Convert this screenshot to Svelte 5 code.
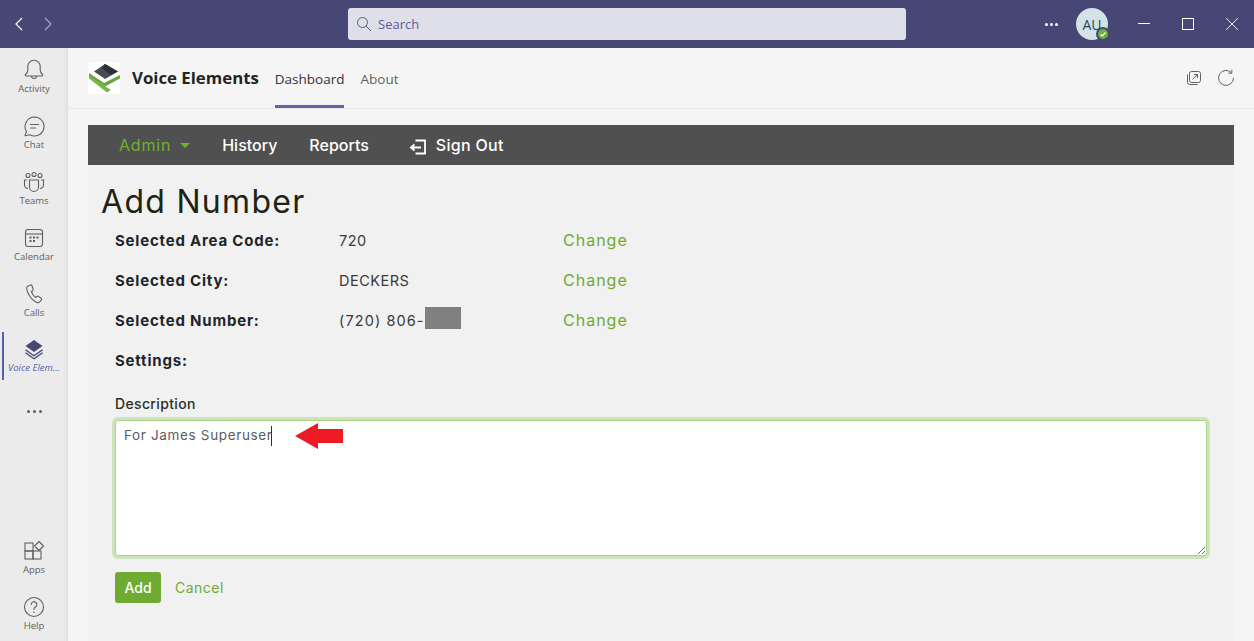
<script>
  const railTop = [
    { label: 'Activity', icon: 'bell' },
    { label: 'Chat', icon: 'chat' },
    { label: 'Teams', icon: 'teams' },
    { label: 'Calendar', icon: 'calendar' },
    { label: 'Calls', icon: 'calls' }
  ];

  const summary = [
    { label: 'Selected Area Code:', value: '720', change: true },
    { label: 'Selected City:', value: 'DECKERS', change: true },
    { label: 'Selected Number:', value: '(720) 806-', masked: true, change: true },
    { label: 'Settings:', value: '', change: false }
  ];

  let description = $state('For James Superuser');
</script>

{#snippet railIcon(name)}
  <svg class="rail-icon" viewBox="0 0 24 24" fill="none" stroke="#5f5f5f" stroke-width="1.1">
    {#if name === 'bell'}
      <path d="M3.500 16.500c1.500-1.200 2.300-2.600 2.300-4.500V8.500a6.200 6.200 0 0 1 12.400 0V12c0 1.900.8 3.300 2.300 4.500.5.500.2 1.500-.6 1.500H4.100c-.8 0-1.100-1-.6-1.500z" stroke-linejoin="round" />
      <path d="M9.500 18a2.500 2.500 0 0 0 5 0" />
    {:else if name === 'chat'}
      <path d="M12.500 3a9.500 9.500 0 1 1-4.800 17.700L3 21.800l1.500-4.300A9.500 9.500 0 0 1 12.500 3z" stroke-linejoin="round" />
      <path d="M8.500 10.500h8M8.500 14h5" stroke-linecap="round" />
    {:else if name === 'teams'}
      <circle cx="6" cy="5.500" r="2" /><circle cx="12" cy="4.500" r="2" /><circle cx="18" cy="5.500" r="2" />
      <path d="M7.500 10h9v7a4.500 4.500 0 0 1-9 0z" />
      <path d="M5 10H2.500v5a3.500 3.500 0 0 0 3.500 3.500M19 10h2.500v5a3.500 3.500 0 0 1-3.500 3.500" />
    {:else if name === 'calendar'}
      <rect x="3.500" y="3.500" width="17" height="17" rx="2.500" />
      <path d="M3.500 8h17" />
      <g fill="#5f5f5f" stroke="none">
        <rect x="7.500" y="10.500" width="2" height="2" /><rect x="11" y="10.500" width="2" height="2" /><rect x="14.500" y="10.500" width="2" height="2" />
        <rect x="7.500" y="14" width="2" height="2" /><rect x="11" y="14" width="2" height="2" />
      </g>
    {:else if name === 'calls'}
      <path d="M8.500 3l-2.800 1.200c-1 .5-1.200 1.500-1 2.800.8 4.500 4.500 10.500 9 13 1.500.8 3 .8 4-.2l1.500-1.600c.6-.7.4-1.500-.2-2l-2.500-1.800c-.7-.4-1.300-.3-1.900.2l-1 .9c-2-1.300-3.500-3.600-4.200-6l1.200-.8c.6-.5.700-1.100.5-1.800L9.900 3.500C9.600 3 9.100 2.800 8.500 3z" stroke-linejoin="round" />
    {:else if name === 'apps'}
      <rect x="3" y="4" width="8" height="8" /><rect x="3" y="12" width="8" height="8" /><rect x="11" y="12" width="8" height="8" />
      <path d="M17 2.500l4.500 4.500-4.500 4.500-4.500-4.500z" stroke-linejoin="round" />
    {:else if name === 'help'}
      <circle cx="12" cy="12" r="9.500" />
      <path d="M9.200 9.500a2.800 2.800 0 1 1 4.500 2.200c-1 .8-1.700 1.300-1.700 2.800" stroke-linecap="round" />
      <circle cx="12" cy="17.300" r=".8" fill="#5f5f5f" stroke="none" />
    {/if}
  </svg>
{/snippet}

<div class="window">
  <header class="titlebar">
    <div class="history">
      <svg viewBox="0 0 12 16" width="12" height="16" fill="none" stroke="#fff" stroke-width="1.200"><path d="M9 2L3 8l6 6" /></svg>
      <svg viewBox="0 0 12 16" width="12" height="16" fill="none" stroke="#a6a6c4" stroke-width="1.200"><path d="M3 2l6 6-6 6" /></svg>
    </div>
    <div class="search">
      <svg viewBox="0 0 14 14" width="14" height="14" fill="none" stroke="#5c5c6e" stroke-width="1"><circle cx="5.500" cy="5.500" r="5" /><path d="M9 9l5 5" /></svg>
      <span>Search</span>
    </div>
    <div class="window-tools">
      <span class="more-dots">
        <i></i><i></i><i></i>
      </span>
      <div class="avatar">
        AU
        <span class="presence">
          <svg viewBox="0 0 10 10" width="10" height="10" fill="none" stroke="#fff" stroke-width="1.200"><path d="M2.500 5.500l1.700 1.500 3.300-3.500" /></svg>
        </span>
      </div>
      <div class="caption-btns">
        <svg viewBox="0 0 12 12" width="12" height="12" stroke="#fff" stroke-width="1"><path d="M0 5.500h12" /></svg>
        <svg viewBox="0 0 12 12" width="12" height="12" fill="none" stroke="#fff" stroke-width="1"><rect x=".5" y=".5" width="11" height="11" /></svg>
        <svg viewBox="0 0 12 12" width="12" height="12" stroke="#fff" stroke-width=".9"><path d="M0 0l12 12M12 0L0 12" /></svg>
      </div>
    </div>
  </header>

  <div class="body">
    <nav class="rail">
      {#each railTop as item}
        <div class="rail-item">
          {@render railIcon(item.icon)}
          <span>{item.label}</span>
        </div>
      {/each}
      <div class="rail-item active">
        <svg class="rail-icon" viewBox="0 0 24 24" fill="#464775">
          <path d="M12 3l8.500 6-8.500 6-8.500-6z" />
          <path d="M3.800 12.300L12 18l8.200-5.700.8.900L12 19.500 3 13.200z" />
          <path d="M3.800 15.300L12 21l8.200-5.700.8.900L12 22.500 3 16.200z" />
        </svg>
        <span>Voice Elem...</span>
      </div>
      <div class="rail-more"><i></i><i></i><i></i></div>
      <div class="rail-bottom">
        <div class="rail-item">
          {@render railIcon('apps')}
          <span>Apps</span>
        </div>
        <div class="rail-item">
          {@render railIcon('help')}
          <span>Help</span>
        </div>
      </div>
    </nav>

    <main class="app">
      <div class="app-header">
        <div class="logo">
          <svg viewBox="0 0 32 32" width="32" height="32">
            <rect width="32" height="32" rx="2" fill="#fff" />
            <path d="M17 2l13 7.500L17 17 6 9.500z" fill="#4b4b56" />
            <path d="M17 2l13 7.500-7 3.500-9-7z" fill="#2f2f38" />
            <path d="M1 11l15 10 16-8v3.500L16 25 1 14.500z" fill="#6aa63a" />
            <path d="M1 16.500l18 14 4-2.500L1 14z" fill="#7cb648" />
          </svg>
        </div>
        <strong class="app-name">Voice Elements</strong>
        <div class="tabs">
          <span class="tab selected">Dashboard</span>
          <span class="tab">About</span>
        </div>
        <div class="header-actions">
          <svg viewBox="0 0 16 16" width="16" height="16" fill="none" stroke="#616161" stroke-width="1"><rect x="3.500" y="1.500" width="11" height="11" rx="2" /><path d="M1.500 4.500v8a2 2 0 0 0 2 2h8" /><path d="M6.500 9.500l5-5M8 4.500h3.500V8" /></svg>
          <svg viewBox="0 0 18 18" width="18" height="18" fill="none" stroke="#616161" stroke-width="1"><path d="M14.500 3.800A7.500 7.500 0 1 0 16.500 9" /><path d="M14.800 .8v3.400h-3.400" /></svg>
        </div>
      </div>

      <div class="frame">
        <div class="menu">
          <span class="menu-item admin">Admin <i class="caret"></i></span>
          <span class="menu-item">History</span>
          <span class="menu-item">Reports</span>
          <span class="menu-item signout">
            <svg viewBox="0 0 18 16" width="18" height="16" fill="none" stroke="#fff" stroke-width="1.800"><path d="M6.500 1.500H16v13H6.500" /><path d="M12 8.500H2M5.500 5.500L2 8.500l3.500 3" /></svg>
            Sign Out
          </span>
        </div>

        <div class="content">
          <h1>Add Number</h1>
          <div class="summary">
            {#each summary as row}
              <div class="row">
                <b>{row.label}</b>
                <span class:masked={row.masked}>{row.value}{#if row.masked}<i class="mask"></i>{/if}</span>
                {#if row.change}<a href="#change">Change</a>{/if}
              </div>
            {/each}
          </div>

          <label for="description">Description</label>
          <div class="field">
            <textarea id="description" bind:value={description}></textarea>
            <span class="annotation">
              <i class="cursor"></i>
              <svg viewBox="0 0 48 26" width="48" height="26"><path d="M0 13L23 0v6h25v14H23v6z" fill="#ed1c24" /></svg>
            </span>
          </div>

          <div class="actions">
            <button type="button">Add</button>
            <a href="#cancel">Cancel</a>
          </div>
        </div>
      </div>
    </main>
  </div>
</div>

<style>
  :global(body) {
    margin: 0;
    overflow: hidden;
  }

  .window {
    width: 1254px;
    height: 641px;
    display: flex;
    flex-direction: column;
    font-family: "Open Sans", "Liberation Sans", sans-serif;
    overflow: hidden;
  }

  .titlebar {
    flex: 0 0 48px;
    background: #464775;
    display: flex;
    align-items: center;
    position: relative;
  }

  .history {
    display: flex;
    gap: 17px;
    margin-left: 13px;
  }

  .search {
    position: absolute;
    left: 348px;
    top: 8px;
    width: 558px;
    height: 32px;
    box-sizing: border-box;
    background: #dfdfea;
    border-radius: 3px;
    display: flex;
    align-items: center;
    gap: 7px;
    padding-left: 9px;
    color: #5b5c93;
    font-size: 13px;
  }

  .window-tools {
    margin-left: auto;
    display: flex;
    align-items: center;
  }

  .more-dots {
    display: flex;
    gap: 2px;
    margin-right: 18px;
  }

  .more-dots i {
    width: 3px;
    height: 3px;
    background: #fff;
    border-radius: 50%;
  }

  .avatar {
    width: 32px;
    height: 32px;
    border-radius: 50%;
    background: #d3e2e7;
    color: #1f4a59;
    font-size: 14px;
    display: flex;
    align-items: center;
    justify-content: center;
    position: relative;
  }

  .presence {
    position: absolute;
    right: -2px;
    bottom: -1px;
    width: 10px;
    height: 10px;
    background: #6bb03a;
    border: 2px solid #464775;
    border-radius: 50%;
    display: flex;
  }

  .caption-btns {
    display: flex;
    gap: 32px;
    margin: 0 16px 0 30px;
  }

  .body {
    flex: 1;
    display: flex;
    min-height: 0;
  }

  .rail {
    flex: 0 0 68px;
    background: #ebebeb;
    display: flex;
    flex-direction: column;
    box-sizing: border-box;
    box-shadow: inset -4px 0 4px -3px rgba(0, 0, 0, 0.08);
  }

  .rail-item {
    height: 56px;
    box-sizing: border-box;
    padding-top: 2px;
    display: flex;
    flex-direction: column;
    align-items: center;
    justify-content: center;
    font-size: 9.500px;
    line-height: 14px;
    color: #616161;
    flex-shrink: 0;
  }

  .rail-icon {
    width: 24px;
    height: 24px;
  }

  .rail-item.active {
    color: #5b5fa8;
    font-style: italic;
    border-left: 2px solid #5b5fa8;
    padding-top: 0;
    margin: 4px 4px 0 2px;
    height: 48px;
  }

  .rail-more {
    display: flex;
    justify-content: center;
    gap: 3px;
    margin-top: 30px;
  }

  .rail-more i {
    width: 3px;
    height: 3px;
    background: #616161;
    border-radius: 50%;
  }

  .rail-bottom {
    margin-top: auto;
  }

  .app {
    flex: 1;
    background: #f5f5f5;
    display: flex;
    flex-direction: column;
    min-width: 0;
  }

  .app-header {
    flex: 0 0 60px;
    border-bottom: 1px solid #e8e8e8;
    display: flex;
    align-items: center;
    padding: 0 19px 0 20px;
  }

  .logo {
    display: flex;
  }

  .app-name {
    font-size: 16.800px;
    font-weight: 700;
    color: #242424;
    margin-left: 12px;
    position: relative;
    top: -1px;
  }

  .tabs {
    display: flex;
    gap: 16px;
    margin-left: 16px;
    align-self: stretch;
  }

  .tab {
    font-size: 13.500px;
    color: #616161;
    display: flex;
    align-items: center;
    padding-top: 2px;
    box-sizing: border-box;
  }

  .tab.selected {
    color: #333;
    border-bottom: 3px solid #6264a7;
    padding-top: 5px;
  }

  .header-actions {
    margin-left: auto;
    display: flex;
    align-items: center;
    gap: 15px;
  }

  .frame {
    flex: 1;
    margin: 16px 20px 0;
    background: #f1f1f1;
    font-family: Inter, "Liberation Sans", sans-serif;
  }

  .menu {
    height: 40px;
    background: #505050;
    display: flex;
    align-items: center;
    padding-left: 31px;
    font-size: 16px;
    font-weight: 500;
    color: #fff;
  }

  .menu-item {
    margin-right: 32px;
    display: flex;
    align-items: center;
    gap: 9px;
    white-space: nowrap;
  }

  .menu-item.admin {
    color: #6fb02f;
    font-weight: 400;
    letter-spacing: 0.8px;
  }

  .caret {
    border: 5px solid transparent;
    border-top-color: #6fb02f;
    border-bottom: 0;
  }

  .signout {
    margin-left: 8px;
    letter-spacing: 0.3px;
  }

  .signout svg {
    margin-top: 3px;
  }

  .content {
    padding: 19px 27px 0;
  }

  h1 {
    margin: 0 0 0 -14px;
    font-size: 32px;
    line-height: 36px;
    font-weight: 400;
    letter-spacing: 1.300px;
    color: #1e2414;
  }

  .row {
    height: 40px;
    display: grid;
    grid-template-columns: 224px 224px auto;
    align-items: center;
    font-size: 15px;
    color: #212529;
  }

  .row b {
    font-weight: 700;
    font-size: 15px;
    letter-spacing: 0.8px;
  }

  .row span {
    font-size: 14.500px;
    display: flex;
    align-items: center;
    letter-spacing: 0.5px;
    color: #3a3a3a;
  }

  .row span.masked {
    letter-spacing: 1.100px;
  }

  .mask {
    width: 36px;
    height: 22px;
    background: #808080;
    margin-bottom: 4px;
  }

  .row a,
  .actions a {
    color: #6fab33;
    text-decoration: none;
  }

  .row a {
    font-size: 16px;
    letter-spacing: 1px;
  }

  label {
    display: block;
    margin-top: 13px;
    font-size: 14px;
    font-weight: 500;
    letter-spacing: 0.35px;
    color: #2b2f25;
    line-height: 21px;
  }

  .field {
    position: relative;
    margin-top: 6px;
    display: flex;
  }

  textarea {
    width: 100%;
    height: 136px;
    box-sizing: border-box;
    border: 1px solid #a9d484;
    border-radius: 3px;
    box-shadow: 0 0 0 3px #cfe4bc;
    outline: none;
    background: #fff;
    padding: 4px 8px;
    font-family: inherit;
    font-size: 13.500px;
    letter-spacing: 0.65px;
    line-height: 20px;
    color: #595d63;
    resize: vertical;
  }

  .annotation {
    position: absolute;
    left: 156px;
    top: 3px;
    display: flex;
    align-items: center;
    gap: 23px;
  }

  .cursor {
    width: 1px;
    height: 20px;
    background: #333;
  }

  .actions {
    margin-top: 16px;
    display: flex;
    align-items: center;
    gap: 14px;
  }

  button {
    width: 46px;
    height: 31px;
    border: 0;
    border-radius: 3px;
    background: #6fab33;
    color: #fff;
    font-family: inherit;
    font-size: 14px;
    font-weight: 500;
    padding: 0;
  }

  .actions a {
    font-size: 14px;
    letter-spacing: 0.5px;
  }
</style>
